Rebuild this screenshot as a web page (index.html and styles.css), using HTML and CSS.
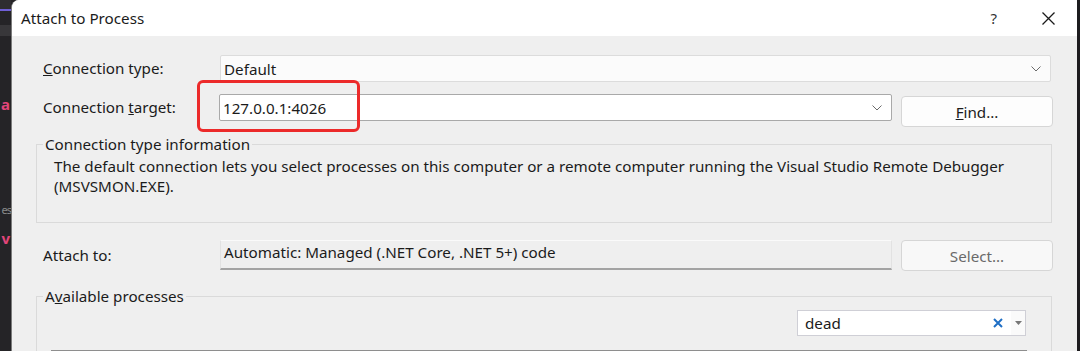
FILE: index.html
```html
<!DOCTYPE html>
<html lang="en" dir="ltr">
  <head>
    <link rel="stylesheet" href="styles.css">
  </head>
  <body>
    <div class="desktop">
      <div class="edge-left">
        <div class="edge-tab"></div>
        <div class="edge-frag pink frag-a">a</div>
        <div class="edge-frag gray frag-es">es</div>
        <div class="edge-frag pink frag-v">v</div>
      </div>

      <div class="dialog">
        <div class="titlebar">
          <span class="title">Attach to Process</span>
          <div class="caption-btns">
            <span class="help">?</span>
            <svg class="close" width="13" height="13" viewBox="0 0 13 13">
              <path d="M0.5 0.5 L12.5 12.5 M12.5 0.5 L0.5 12.5" stroke="#1a1a1a" stroke-width="1.3" fill="none"/>
            </svg>
          </div>
        </div>

        <div class="content">
          <div class="form-grid">
            <label class="label"><u>C</u>onnection type:</label>
            <div class="dropdown wide">
              <span>Default</span>
              <svg class="chevron" width="10" height="6" viewBox="0 0 10 6"><path d="M0.5 0.5 L5 5 L9.5 0.5" stroke="#6b6b6b" fill="none"/></svg>
            </div>

            <label class="label">Connection <u>t</u>arget:</label>
            <div class="combo">
              <span>127.0.0.1:4026</span>
              <svg class="chevron" width="10" height="6" viewBox="0 0 10 6"><path d="M0.5 0.5 L5 5 L9.5 0.5" stroke="#6b6b6b" fill="none"/></svg>
            </div>
            <button class="btn find"><u>F</u>ind...</button>
          </div>

          <fieldset class="group info">
            <legend>Connection type information</legend>
            <p>The default connection lets you select processes on this computer or a remote computer running the Visual Studio Remote Debugger<br>(MSVSMON.EXE).</p>
          </fieldset>

          <div class="form-grid attach-row">
            <label class="label">Attach to:</label>
            <div class="readonly">Automatic: Managed (.NET Core, .NET 5+) code</div>
            <button class="btn select">Select...</button>
          </div>

          <fieldset class="group processes">
            <legend>A<u>v</u>ailable processes</legend>
            <div class="search-row">
              <div class="search">
                <span class="search-text">dead</span>
                <svg class="clear" width="10" height="10" viewBox="0 0 10 10"><path d="M1 1 L9 9 M9 1 L1 9" stroke="#1f6fc5" stroke-width="2" fill="none"/></svg>
                <span class="search-drop"><svg width="7" height="4" viewBox="0 0 7 4"><path d="M0 0 L7 0 L3.5 4 Z" fill="#777"/></svg></span>
              </div>
            </div>
            <div class="list-top"></div>
          </fieldset>
        </div>

        <div class="callout"></div>
      </div>

      <div class="edge-right"></div>
    </div>
  </body>
</html>
```

FILE: styles.css
```css
body {
  margin: 0;
  background-color: #252427;
  font-family: "Noto Sans", "Liberation Sans", sans-serif;
  color: #1b1b1b;
}

.desktop {
  display: flex;
  height: 351px;
  overflow: hidden;
}

/* editor peeking out behind the dialog */
.edge-left {
  width: 11px;
  flex: none;
  overflow: hidden;
  background-color: #252427;
  font-size: 15px;
  line-height: 14px;
}

.edge-tab {
  height: 9px;
  background-color: #2e2d30;
  border-bottom: 2px solid #6f5fd6;
  box-shadow: 0 25px 0 0 #38373a;
}

.edge-frag {
  text-align: right;
  white-space: nowrap;
  margin-right: 1px;
}

.pink {
  color: #e2457a;
  font-weight: bold;
}

.gray {
  color: #8a8a8a;
  font-size: 11px;
  letter-spacing: -1px;
  margin-right: 0;
}

.frag-a {
  margin-top: 86px;
}

.frag-es {
  margin-top: 92px;
}

.frag-v {
  margin-top: 14px;
}

.edge-right {
  width: 3px;
  flex: none;
  background-color: #1d1c1f;
}

.dialog {
  width: 1065px;
  flex: none;
  background-color: #efefef;
  border-left: 1px solid #7b7b7b;
  border-top-left-radius: 8px;
  position: relative;
  overflow: hidden;
}

.titlebar {
  height: 36px;
  background-color: #fff;
  display: flex;
  align-items: center;
  justify-content: space-between;
  padding-left: 9px;
}

.title {
  font-size: 15.2px;
}

.caption-btns {
  display: flex;
  align-items: center;
  gap: 45px;
  margin-right: 22px;
}

.help {
  font-size: 15px;
  color: #333;
}

.content {
  padding: 19px 0 0 31px;
}

.form-grid {
  display: grid;
  grid-template-columns: 168px 672px 152px;
  column-gap: 9px;
  row-gap: 12px;
  align-items: start;
}

.label {
  font-size: 15.2px;
  line-height: 27px;
}

.dropdown,
.combo,
.readonly {
  box-sizing: border-box;
  height: 27px;
  display: flex;
  align-items: center;
  justify-content: space-between;
  padding: 0 9px 0 3px;
  font-size: 15.2px;
}

.dropdown {
  grid-column: 2 / 4;
  margin-right: 2px;
  background-color: #fbfbfb;
  border: 1px solid #dcdcdc;
  border-radius: 2px;
}

.combo {
  margin-left: -1px;
  background-color: #fff;
  border: 1px solid #a9a9a9;
  border-radius: 2px;
}

.chevron {
  flex: none;
}

.btn {
  box-sizing: border-box;
  height: 31px;
  margin-top: 2px;
  background-color: #fdfdfd;
  border: 1px solid #d6d6d6;
  border-radius: 4px;
  font-family: inherit;
  font-size: 15.2px;
  color: #1b1b1b;
  padding: 0;
}

.group {
  margin: 0;
  padding: 0;
  border: 1px solid #dadada;
  margin-left: -7px;
  width: 1016px;
  box-sizing: border-box;
}

.group legend {
  font-size: 15.2px;
  line-height: 20px;
  padding: 0 2px;
  margin-left: 6px;
}

.info {
  margin-top: 7px;
}

.info p {
  margin: 0;
  padding: 2px 17px 26px 17px;
  font-size: 15.2px;
  line-height: 20px;
}

.attach-row {
  margin-top: 17px;
}

.attach-row .label {
  line-height: 30px;
}

.readonly {
  height: 30px;
  background-color: #efefef;
  border: 1px solid #e2e2e2;
  border-top-color: #fafafa;
  border-bottom: 2px solid #a3a3a3;
  align-items: flex-start;
  padding-top: 1px;
}

.select {
  margin-top: 0;
  background-color: #f8f8f8;
  color: #6a6a6a;
}

.processes {
  margin-top: 15px;
  height: 80px;
}

.search-row {
  display: flex;
  justify-content: flex-end;
  margin: 4px 25px 0 0;
}

.search {
  box-sizing: border-box;
  width: 229px;
  height: 26px;
  display: flex;
  align-items: center;
  background-color: #fff;
  border: 1px solid #cfcfd6;
  font-size: 15.2px;
}

.search-text {
  flex: 1;
  padding-left: 7px;
}

.clear {
  margin-right: 8px;
}

.search-drop {
  width: 14px;
  height: 24px;
  display: flex;
  align-items: center;
  justify-content: center;
  background-color: #fafafa;
}

.list-top {
  height: 2px;
  background-color: #8e8e8e;
  margin: 14px 0 0 14px;
  width: 976px;
}

/* red annotation drawn over the screenshot */
.callout {
  position: absolute;
  left: 185px;
  top: 80px;
  width: 157px;
  height: 46px;
  border: 3px solid #ec2a2a;
  border-radius: 6px;
}
```
